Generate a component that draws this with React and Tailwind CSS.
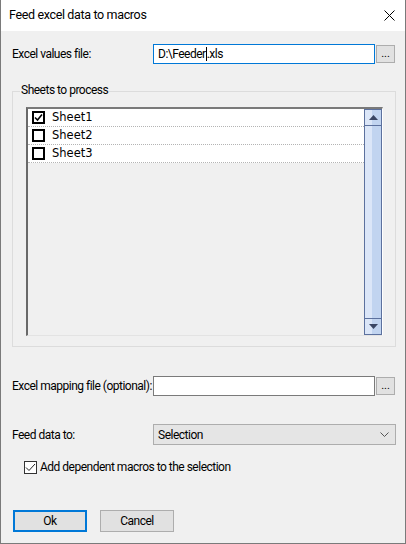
import React from "react";

const ui = { fontFamily: 'Roboto, "Open Sans", sans-serif' };
const listFont = { fontFamily: '"DejaVu Sans", Verdana, sans-serif' };

function BrowseButton() {
  return (
    <div className="ml-[1px] flex h-[18px] w-[19px] items-end justify-center border border-[#adadad] bg-[#e1e1e1] pb-[3px] text-[11px] leading-none tracking-normal text-black">
      ...
    </div>
  );
}

function ListCheck({ checked }) {
  return (
    <div className="flex h-[13px] w-[13px] items-center justify-center border-2 border-black bg-white">
      {checked && (
        <svg width="9" height="9" viewBox="0 0 9 9">
          <path d="M1 4.5 L3.5 7 L8 1.5" stroke="black" strokeWidth="1.6" fill="none" />
        </svg>
      )}
    </div>
  );
}

function SheetRow({ name, checked }) {
  return (
    <div className="flex h-[18px] items-center gap-[7px] border-b border-dotted border-[#b4b4b4] bg-white pl-[4px]">
      <ListCheck checked={checked} />
      <span className="text-[11.5px] leading-none tracking-normal text-black" style={listFont}>
        {name}
      </span>
    </div>
  );
}

function Arrow({ down }) {
  return (
    <svg width="9" height="5" viewBox="0 0 9 5">
      {down ? (
        <path d="M0 0 H9 L4.5 5 Z" fill="#3a4664" />
      ) : (
        <path d="M0 5 H9 L4.5 0 Z" fill="#3a4664" />
      )}
    </svg>
  );
}

function ScrollBar() {
  return (
    <div className="flex w-[18px] flex-col border border-[#5c719e] bg-[linear-gradient(to_right,#dbe6f8_45%,#c1d4f0_45%)]">
      <div className="flex h-[16px] items-center justify-center border-b border-[#5c719e]">
        <Arrow />
      </div>
      <div className="flex-1" />
      <div className="flex h-[16px] items-center justify-center border-t border-[#5c719e]">
        <Arrow down />
      </div>
    </div>
  );
}

export default function App() {
  return (
    <div
      className="flex h-[544px] w-[406px] flex-col border-x border-b border-[#7a7a7a] bg-[#f0f0f0] text-[12px] tracking-[-0.5px] text-black"
      style={ui}
    >
      {/* title bar */}
      <div className="flex h-[31px] items-center justify-between bg-white pl-[8px] pr-[10px]">
        <span className="whitespace-nowrap text-[12.5px] leading-none tracking-[-0.35px]">Feed excel data to macros</span>
        <svg width="11" height="11" viewBox="0 0 11 11">
          <path d="M0.5 0.5 L10.5 10.5 M10.5 0.5 L0.5 10.5" stroke="black" strokeWidth="1" />
        </svg>
      </div>

      <div className="flex flex-col pl-[11px]">
        {/* values file */}
        <div className="mt-[13px] flex h-[20px] items-center">
          <span className="w-[141px] shrink-0 whitespace-nowrap leading-none">Excel values file:</span>
          <div className="flex h-[20px] w-[222px] items-center border border-[#0078d7] bg-white pl-[4px] leading-none">
            <span>D:\Feeder</span>
            <span className="h-[14px] w-[1px] bg-black" />
            <span>.xls</span>
          </div>
          <BrowseButton />
        </div>

        {/* sheets group */}
        <div className="relative mt-[27px] h-[256px] w-[384px] border border-[#dcdcdc] pl-[13px] pt-[15px]">
          <span className="absolute left-[7px] top-[-8px] whitespace-nowrap bg-[#f0f0f0] px-[1px] leading-none">
            Sheets to process
          </span>
          <div className="flex h-[229px] w-[357px] border-l-2 border-t-2 border-b border-r border-l-[#696969] border-t-[#7a7a7a] border-b-[#e3e3e3] border-r-[#ffffff]">
            <div className="flex flex-1 flex-col">
              <SheetRow name="Sheet1" checked />
              <SheetRow name="Sheet2" />
              <SheetRow name="Sheet3" />
            </div>
            <ScrollBar />
          </div>
        </div>

        {/* mapping file */}
        <div className="mt-[29px] flex h-[20px] items-center">
          <span className="w-[141px] shrink-0 whitespace-nowrap leading-none">Excel mapping file (optional):</span>
          <div className="h-[20px] w-[222px] border border-[#7a7a7a] bg-white" />
          <BrowseButton />
        </div>

        {/* target */}
        <div className="mt-[28px] flex h-[21px] items-center">
          <span className="w-[141px] shrink-0 whitespace-nowrap leading-none">Feed data to:</span>
          <div className="flex h-[21px] w-[243px] items-center justify-between border border-[#adadad] bg-[#e5e5e5] pl-[4px] pr-[6px] leading-none">
            <span>Selection</span>
            <svg width="9" height="5" viewBox="0 0 9 5">
              <path d="M0.5 0.5 L4.5 4.5 L8.5 0.5" stroke="#555" strokeWidth="1" fill="none" />
            </svg>
          </div>
        </div>

        {/* dependent macros */}
        <div className="mt-[15px] ml-[12px] flex h-[14px] items-center gap-[3px]">
          <div className="flex h-[13px] w-[13px] items-center justify-center border border-[#333] bg-white">
            <svg width="11" height="9" viewBox="0 0 11 9">
              <path d="M1 4.5 L4 7.5 L10 1" stroke="#222" strokeWidth="1" fill="none" />
            </svg>
          </div>
          <span className="whitespace-nowrap leading-none">Add dependent macros to the selection</span>
        </div>

        {/* buttons */}
        <div className="ml-[1px] mt-[36px] flex gap-[13px]">
          <div className="flex h-[22px] w-[74px] items-center justify-center border-2 border-[#0078d7] bg-[#e1e1e1] leading-none">
            Ok
          </div>
          <div className="flex h-[22px] w-[74px] items-center justify-center border border-[#adadad] bg-[#e1e1e1] leading-none">
            Cancel
          </div>
        </div>
      </div>
    </div>
  );
}
